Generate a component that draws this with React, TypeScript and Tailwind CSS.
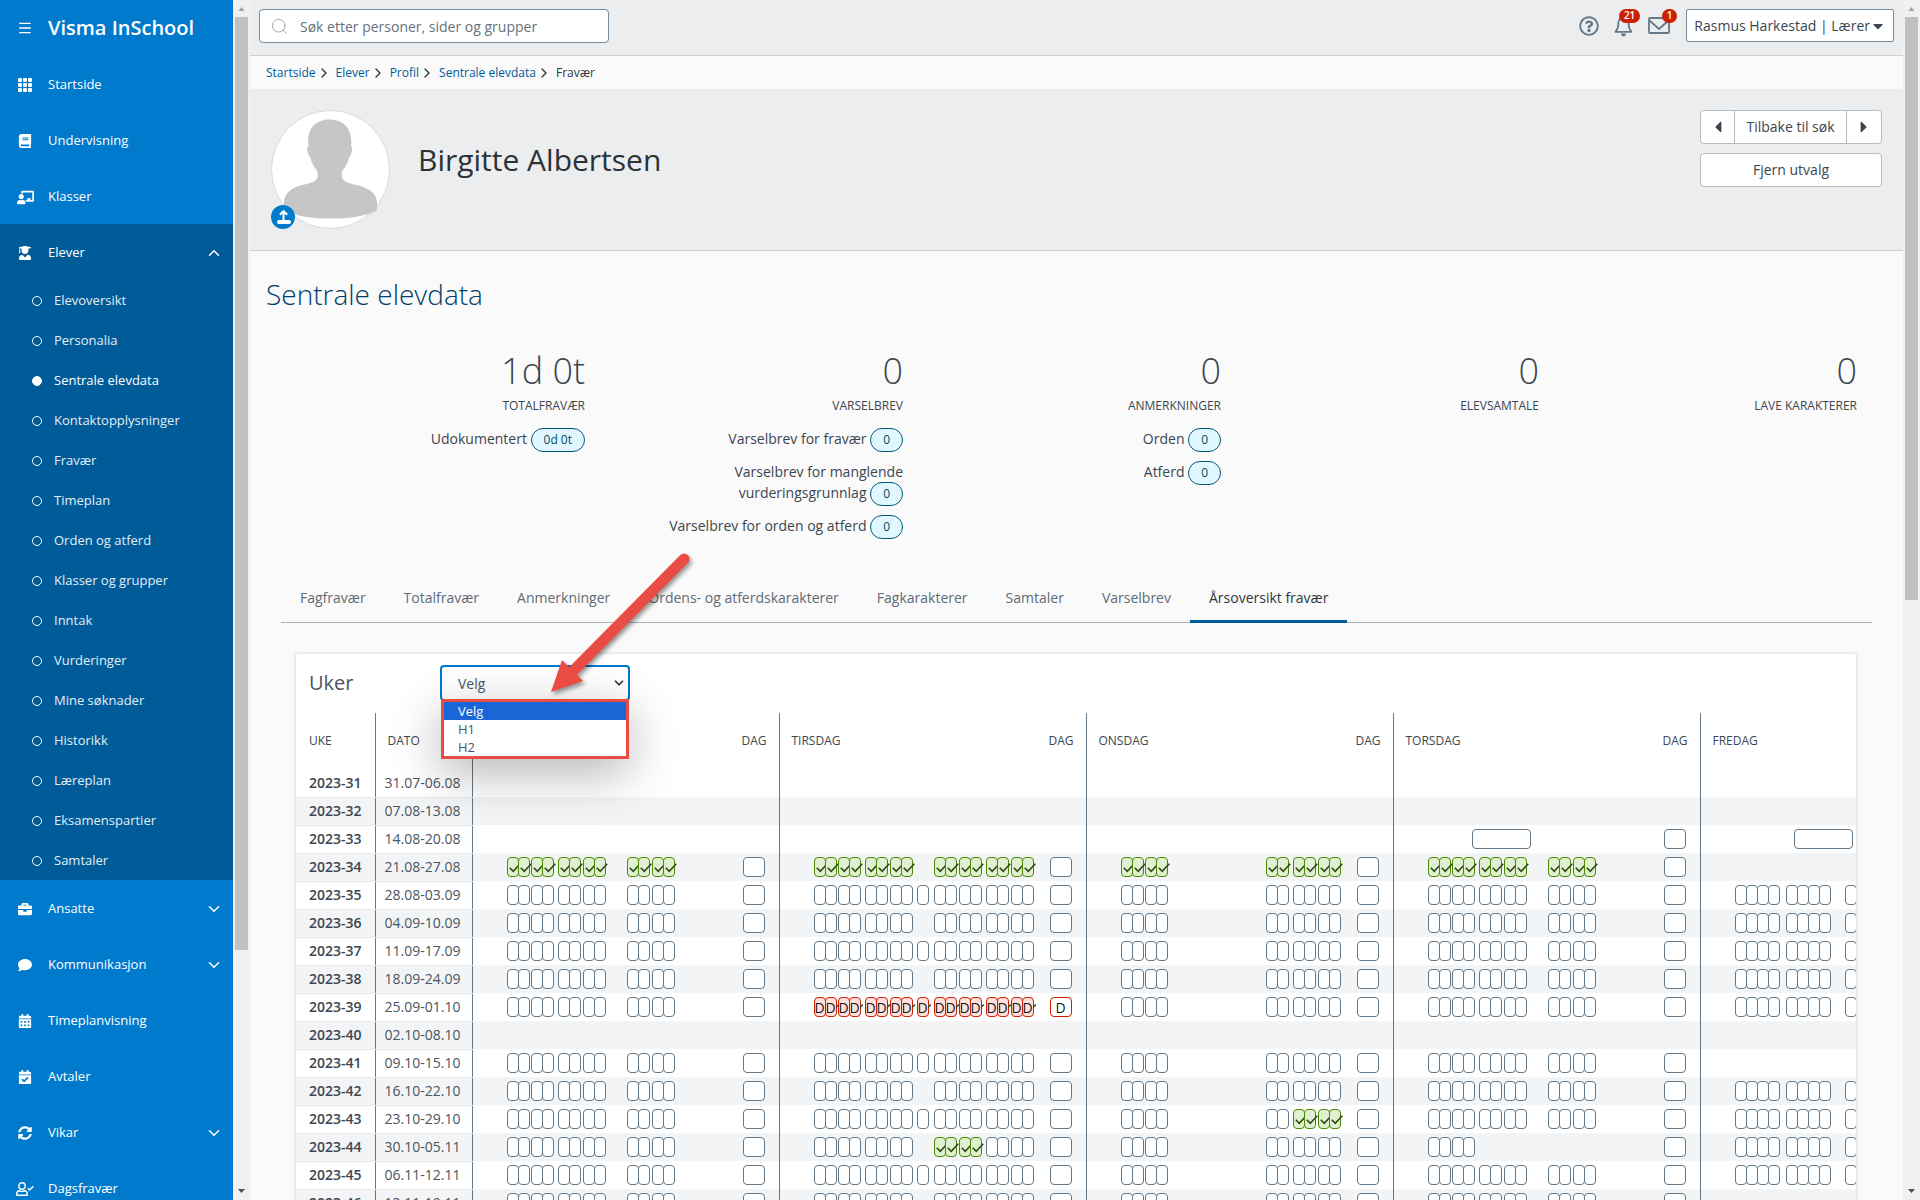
import { useState } from 'react';
import type { ReactNode } from 'react';
import {
  FaBook,
  FaBriefcase,
  FaCalendarAlt,
  FaCalendarCheck,
  FaCaretDown,
  FaCaretLeft,
  FaCaretRight,
  FaChalkboardTeacher,
  FaComment,
  FaRegQuestionCircle,
  FaSyncAlt,
  FaUserGraduate,
} from 'react-icons/fa';
import { BsGrid3X3GapFill } from 'react-icons/bs';
import { ChevronDown, ChevronRight, ChevronUp, Menu, Search } from 'lucide-react';
import clsx from 'clsx';

type NavItem = { label: string; icon: ReactNode; expandable?: boolean };

const topNav: NavItem[] = [
  { label: 'Startside', icon: <BsGrid3X3GapFill size={16} /> },
  { label: 'Undervisning', icon: <FaBook size={14} /> },
  { label: 'Klasser', icon: <FaChalkboardTeacher size={17} /> },
];

const subNav = [
  'Elevoversikt',
  'Personalia',
  'Sentrale elevdata',
  'Kontaktopplysninger',
  'Fravær',
  'Timeplan',
  'Orden og atferd',
  'Klasser og grupper',
  'Inntak',
  'Vurderinger',
  'Mine søknader',
  'Historikk',
  'Læreplan',
  'Eksamenspartier',
  'Samtaler',
];

const bottomNav: NavItem[] = [
  { label: 'Ansatte', icon: <FaBriefcase size={14} />, expandable: true },
  { label: 'Kommunikasjon', icon: <FaComment size={14} />, expandable: true },
  { label: 'Timeplanvisning', icon: <FaCalendarAlt size={14} /> },
  { label: 'Avtaler', icon: <FaCalendarCheck size={14} /> },
  { label: 'Vikar', icon: <FaSyncAlt size={14} />, expandable: true },
  { label: 'Dagsfravær', icon: <UserCheckIcon /> },
];

const crumbs = ['Startside', 'Elever', 'Profil', 'Sentrale elevdata'];

const stats = [
  { value: '1d 0t', label: 'Totalfravær', rows: [['Udokumentert', '0d 0t']] },
  {
    value: '0',
    label: 'Varselbrev',
    rows: [
      ['Varselbrev for fravær', '0'],
      ['Varselbrev for manglende vurderingsgrunnlag', '0'],
      ['Varselbrev for orden og atferd', '0'],
    ],
  },
  { value: '0', label: 'Anmerkninger', rows: [['Orden', '0'], ['Atferd', '0']] },
  { value: '0', label: 'Elevsamtale', rows: [] },
  { value: '0', label: 'Lave karakterer', rows: [] },
];

const tabs = [
  'Fagfravær',
  'Totalfravær',
  'Anmerkninger',
  'Ordens- og atferdskarakterer',
  'Fagkarakterer',
  'Samtaler',
  'Varselbrev',
  'Årsoversikt fravær',
];

type Mark = 'empty' | 'present' | 'documented';
type Slot = { start: number; width: number; mark: Mark };
type Day = { slots: Slot[]; dag: Mark | null };

const weekdays = ['Mandag', 'Tirsdag', 'Onsdag', 'Torsdag', 'Fredag'];
const morning = [34, 45, 58, 69, 85, 96, 110, 121];
const midday = [154, 165, 179, 190];
const afternoon = [206, 217, 231, 242];
const none: Day = { slots: [], dag: null };

const makeSlots = (starts: number[], mark: Mark = 'empty', width = 12): Slot[] =>
  starts.map((start) => ({ start, width, mark }));

function monday(week: number): Day {
  if (week < 34 || week === 40) return none;
  return { slots: makeSlots([...morning, ...midday], week === 34 ? 'present' : 'empty'), dag: 'empty' };
}

function tuesday(week: number): Day {
  if (week < 34 || week === 40) return none;
  const mark: Mark = week === 34 ? 'present' : week === 39 ? 'documented' : 'empty';
  const lunch = week % 2 ? [137] : [];
  return {
    slots: [
      ...makeSlots([...morning, ...lunch], mark),
      ...makeSlots(midday, week === 44 ? 'present' : mark),
      ...makeSlots(afternoon, mark),
    ],
    dag: week === 39 ? 'documented' : 'empty',
  };
}

function wednesday(week: number): Day {
  if (week < 34 || week === 40) return none;
  const mark: Mark = week === 34 ? 'present' : 'empty';
  return {
    slots: [
      ...makeSlots([34, 45, 58, 69, 179, 190], mark),
      ...makeSlots(afternoon, week === 43 ? 'present' : mark),
    ],
    dag: 'empty',
  };
}

function thursday(week: number): Day {
  if (week === 33) return { slots: makeSlots([78], 'empty', 59), dag: 'empty' };
  if (week < 34 || week === 40) return none;
  const starts = week === 44 ? morning.slice(0, 4) : [...morning, ...midday];
  return { slots: makeSlots(starts, week === 34 ? 'present' : 'empty'), dag: 'empty' };
}

function friday(week: number): Day {
  if (week === 33) return { slots: makeSlots([93], 'empty', 59), dag: 'empty' };
  if (week < 35 || [40, 41, 46].includes(week)) return none;
  return { slots: makeSlots([34, 45, 56, 67, 85, 96, 107, 118, 144, 155, 169, 180], 'empty'), dag: 'empty' };
}

const dates = [
  '31.07-06.08',
  '07.08-13.08',
  '14.08-20.08',
  '21.08-27.08',
  '28.08-03.09',
  '04.09-10.09',
  '11.09-17.09',
  '18.09-24.09',
  '25.09-01.10',
  '02.10-08.10',
  '09.10-15.10',
  '16.10-22.10',
  '23.10-29.10',
  '30.10-05.11',
  '06.11-12.11',
  '13.11-19.11',
];

const weeks = dates.map((date, i) => {
  const week = 31 + i;
  return { name: `2023-${week}`, date, days: [monday(week), tuesday(week), wednesday(week), thursday(week), friday(week)] };
});

function UserCheckIcon() {
  return (
    <svg width="18" height="14" viewBox="0 0 18 14" fill="none" stroke="currentColor" strokeWidth="1.4">
      <circle cx="6" cy="4" r="3.2" />
      <path d="M.8 13.2v-1.4c0-2 1.6-3 3-3 1 .5 3.400.5 4.400 0 1.400 0 3 1 3 3v1.400z" strokeLinejoin="round" />
      <path d="M11.800 6.200l1.800 1.800 3.800-3.800" />
    </svg>
  );
}

function BellIcon() {
  return (
    <svg width="19" height="22" viewBox="0 0 19 22">
      <path
        d="M9.500 2.600c-3.400 0-5.100 2.400-5.100 5.200 0 5-1.200 7.200-2.900 9h16c-1.700-1.800-2.900-4-2.900-9 0-2.800-1.700-5.200-5.100-5.200z"
        fill="none"
        stroke="currentColor"
        strokeWidth="1.800"
        strokeLinejoin="round"
      />
      <path d="M9.500 2.800V1" stroke="currentColor" strokeWidth="1.800" strokeLinecap="round" />
      <path d="M7 18.500h5c0 1.800-1 3-2.500 3S7 20.300 7 18.500z" fill="currentColor" />
    </svg>
  );
}

function MailIcon() {
  return (
    <svg width="22" height="17" viewBox="0 0 22 17" fill="none" stroke="currentColor" strokeWidth="1.800" strokeLinejoin="round">
      <rect x="1" y="1" width="20" height="15" rx="1" />
      <path d="M1.500 3.500L11 12l9.500-8.500" />
    </svg>
  );
}

function UploadBadge() {
  return (
    <button type="button" aria-label="Last opp bilde" className="absolute bottom-0 left-0 h-6 w-6 rounded-full bg-[#007acc]">
      <svg viewBox="0 0 24 24" className="h-6 w-6" fill="none" stroke="#fff">
        <path d="M12.500 6.500v9M8.800 9.800l3.700-3.700 3.700 3.700" strokeWidth="2" />
        <rect x="6.500" y="15.500" width="13" height="3" rx="1" fill="#fff" strokeWidth="1" />
      </svg>
    </button>
  );
}

function Avatar() {
  return (
    <div className="relative h-[119px] w-[119px] shrink-0">
      <svg viewBox="0 0 120 120" className="h-full w-full">
        <circle cx="60" cy="60" r="59.500" fill="#fff" stroke="#d6d9dc" />
        <path
          d="M59 9.500c14 0 22 9 22 22 0 2 0 4-.4 5.500 2 0 1.500 3.500.6 6-.6 2-1.200 4-2.400 4.200-1.400 6.800-4.400 11.300-7.300 14.800v5c0 4 5 6.500 12 8 14 2.500 23.500 8 23.500 19 0 3 0 5-.4 7.500C94 107.500 77 109.500 59 109.500S26 107 15 101.500c-1.500-3-2-5-2-8 0-10 8-16 21-18.500 8-1.500 13-4 13-8v-5c-3-3.500-6-8-7.400-14.800-1.200-.2-1.800-2.200-2.400-4.200-.8-2.500-1.300-6 .6-6-.3-1.500-.4-3.500-.4-5.500 0-13 7.600-22 21.600-22z"
          fill="#c6c6c6"
        />
      </svg>
      <UploadBadge />
    </div>
  );
}

function NavLink({ item }: { item: NavItem }) {
  return (
    <a href="#" className="flex h-14 shrink-0 items-center pt-0.5 pr-[10px] text-[13px] font-medium text-white">
      <span className="flex w-[50px] justify-center">{item.icon}</span>
      <span className="-ml-0.5 flex-1">{item.label}</span>
      {item.expandable ? <ChevronDown size={18} strokeWidth={2} /> : null}
    </a>
  );
}

function Sidebar() {
  return (
    <aside className="flex w-[233px] shrink-0 flex-col overflow-hidden bg-[#007acc]">
      <div className="flex h-14 shrink-0 items-center text-white">
        <button type="button" aria-label="Meny" className="flex w-[50px] justify-center">
          <Menu size={16} strokeWidth={2} />
        </button>
        <span className="-ml-0.5 text-xl font-semibold">Visma InSchool</span>
      </div>
      {topNav.map((item) => (
        <NavLink key={item.label} item={item} />
      ))}
      <div className="shrink-0 bg-[#005b99]">
        <a href="#" className="flex h-14 items-center pt-0.5 pr-[10px] text-[13px] font-medium text-white">
          <span className="flex w-[50px] justify-center">
            <FaUserGraduate size={14} />
          </span>
          <span className="-ml-0.5 flex-1">Elever</span>
          <ChevronUp size={18} strokeWidth={2} />
        </a>
        <nav>
          {subNav.map((label) => {
            const active = label === 'Sentrale elevdata';
            return (
              <a
                key={label}
                href="#"
                className={clsx('flex h-10 items-center gap-3 pt-0.5 pl-8 text-[13px]', active ? 'font-medium text-white' : 'text-[#e3eef7]')}
              >
                <span className={clsx('h-[10px] w-[10px] rounded-full border border-white', active && 'bg-white')} />
                {label}
              </a>
            );
          })}
        </nav>
      </div>
      {bottomNav.map((item) => (
        <NavLink key={item.label} item={item} />
      ))}
    </aside>
  );
}

function Scrollbar({ tall }: { tall?: boolean }) {
  return (
    <div className="flex w-[17px] shrink-0 flex-col items-center bg-[#f0f0f0]" aria-hidden="true">
      <svg width="17" height="17" viewBox="0 0 17 17">
        <path d="M5.500 11h6L8.500 7z" fill="#a3a3a3" />
      </svg>
      <div className="flex w-[13px] flex-1 flex-col">
        <div className={clsx('bg-[#c1c1c1]', tall ? 'h-4/5' : 'h-1/2')} />
      </div>
      <svg width="17" height="17" viewBox="0 0 17 17">
        <path d="M5 6h7l-3.500 4z" fill="#505050" />
      </svg>
    </div>
  );
}

function IconButton({ label, count, children }: { label: string; count?: number; children: ReactNode }) {
  return (
    <button type="button" aria-label={label} className="relative flex h-[22px] items-center text-[#647888]">
      {children}
      {count ? (
        <span className="absolute -top-[6px] -right-[7px] flex h-[14px] items-center rounded-full bg-[#cc1f00] px-[5px] text-[10px] font-semibold text-white">
          {count}
        </span>
      ) : null}
    </button>
  );
}

function Header() {
  return (
    <header className="flex h-14 shrink-0 items-start justify-between border-b border-[#cfd2d4] bg-[#ecedef] pt-[9px] pr-[9px] pl-[9px]">
      <label className="flex h-[34px] w-[350px] items-center gap-[11px] rounded-[4px] border border-[#7a8b9a] bg-white px-[10px]">
        <Search size={19} strokeWidth={1} className="text-[#8a949e]" />
        <input
          type="search"
          aria-label="Søk"
          placeholder="Søk etter personer, sider og grupper"
          className="flex-1 pt-px text-sm outline-none placeholder:text-[#66717b]"
        />
      </label>
      <div className="flex items-center">
        <div className="flex items-center gap-[15px] pr-4">
          <IconButton label="Hjelp">
            <FaRegQuestionCircle size={20} />
          </IconButton>
          <IconButton label="Varsler" count={21}>
            <BellIcon />
          </IconButton>
          <IconButton label="Meldinger" count={1}>
            <MailIcon />
          </IconButton>
        </div>
        <button type="button" className="flex h-[33px] items-center rounded-[2px] border border-[#7a8b9a] bg-white px-[7px] text-sm font-medium text-[#3c4650]">
          Rasmus Harkestad | Lærer
          <FaCaretDown size={16} />
        </button>
      </div>
    </header>
  );
}

function Breadcrumbs() {
  return (
    <nav aria-label="Brødsmulesti" className="flex h-[33px] shrink-0 items-center pl-4 text-xs text-[#005b99]">
      {crumbs.map((crumb) => (
        <span key={crumb} className="flex items-center">
          <a href="#">{crumb}</a>
          <ChevronRight size={16} strokeWidth={2} className="mr-1 text-[#30373d]" />
        </span>
      ))}
      <span className="text-[#30373d]">Fravær</span>
    </nav>
  );
}

function ProfileBar() {
  return (
    <section className="flex h-[162px] shrink-0 items-start justify-between border-b border-[#cfd2d4] bg-[#ecedef] pt-[21px] pr-[21px] pl-[21px]">
      <div className="flex gap-7">
        <Avatar />
        <h1 className="pt-[30px] text-3xl leading-10 text-[#2b3238]">Birgitte Albertsen</h1>
      </div>
      <div className="flex w-[182px] flex-col gap-[9px] text-sm text-[#3c4650]">
        <div className="flex h-[34px] divide-x divide-[#b5bdc4] rounded-[4px] border border-[#b5bdc4] bg-white">
          <button type="button" aria-label="Forrige" className="flex w-[34px] items-center justify-center">
            <FaCaretLeft size={18} />
          </button>
          <button type="button" className="flex-1 whitespace-nowrap">
            Tilbake til søk
          </button>
          <button type="button" aria-label="Neste" className="flex w-[34px] items-center justify-center">
            <FaCaretRight size={18} />
          </button>
        </div>
        <button type="button" className="h-[34px] rounded-[4px] border border-[#b5bdc4] bg-white">
          Fjern utvalg
        </button>
      </div>
    </section>
  );
}

function Stats() {
  return (
    <section className="grid grid-cols-5 pt-[33px] pr-[46px] pl-[17px] text-right text-[#3c4650]">
      {stats.map((stat) => (
        <div key={stat.label} className="flex flex-col items-end">
          <p className="text-4xl leading-[48px] font-light">{stat.value}</p>
          <p className="text-xs leading-[22px] uppercase">{stat.label}</p>
          <div className="flex flex-col gap-3 pt-[11px]">
            {stat.rows.map(([label, value]) => (
              <p key={label} className="ml-auto max-w-[250px] text-sm leading-[21px]">
                {label}{' '}
                <span className="-my-1 inline-flex h-6 items-center rounded-full border border-[#005b77] bg-[#e0f7ff] px-3 align-middle text-xs text-[#004a66]">
                  {value}
                </span>
              </p>
            ))}
          </div>
        </div>
      ))}
    </section>
  );
}

function Tabs() {
  const [active, setActive] = useState('Årsoversikt fravær');

  return (
    <div role="tablist" className="mt-[37px] mr-[31px] ml-[31px] flex border-b border-[#a9b4bd]">
      {tabs.map((tab) => (
        <button
          key={tab}
          type="button"
          role="tab"
          aria-selected={tab === active}
          onClick={() => setActive(tab)}
          className={clsx(
            '-mb-px h-[50px] border-b-[3px] px-[19px] pt-0.5 text-sm whitespace-nowrap',
            tab === active ? 'border-[#005b99] text-[#30373d]' : 'border-transparent text-[#5f6b76]',
          )}
        >
          {tab}
        </button>
      ))}
    </div>
  );
}

function Tick() {
  return (
    <svg width="12" height="10" viewBox="0 0 12 10" className="mt-0.5 ml-px shrink-0" fill="none" stroke="#2c4a12" strokeWidth="1.600">
      <path d="M.8 4.800l3.400 3.600L11.300.8" />
    </svg>
  );
}

function Box({ mark, width, offset = 0 }: { mark: Mark; width: number; offset?: number }) {
  return (
    <span
      className={clsx(
        'flex h-5 shrink-0 items-center rounded-[4px] border',
        mark === 'empty' && 'border-[#647888] bg-white',
        mark === 'present' && 'border-[#4a8a00] bg-[#e2f0d2]',
        mark === 'documented' && 'border-[#cc1f00] bg-[#ffe0dc] text-sm text-[#14181b]',
      )}
      style={{ width, marginLeft: offset }}
    >
      {mark === 'present' ? <Tick /> : null}
      {mark === 'documented' ? (
        <>
          <span className="w-[10px] pt-px">D</span>
          {/* the tick sits behind the D, only its tip shows */}
          <svg width="3" height="4" viewBox="0 0 3 4" className="-mt-0.5 shrink-0" fill="none" stroke="#2c4a12" strokeWidth="1.400">
            <path d="M0 3.500L2.800.5" />
          </svg>
        </>
      ) : null}
    </span>
  );
}

function DayCell({ day }: { day: Day }) {
  return (
    <div className="flex items-center justify-between pr-[14px]">
      <div className="flex">
        {day.slots.map((slot, i) => {
          const previous = day.slots[i - 1];
          const end = previous ? previous.start + previous.width : 0;
          return <Box key={slot.start} mark={slot.mark} width={slot.width} offset={slot.start - end} />;
        })}
      </div>
      {day.dag === 'documented' ? (
        <span className="flex h-5 w-[22px] items-center justify-center rounded-[4px] border border-[#cc1f00] bg-white pt-px text-sm text-[#14181b]">
          D
        </span>
      ) : null}
      {day.dag === 'empty' ? <Box mark="empty" width={22} /> : null}
    </div>
  );
}

function WeekSelect() {
  const [value, setValue] = useState('Velg');
  const options = ['Velg', 'H1', 'H2'];

  return (
    <div className="relative w-[190px]">
      <select
        id="uker"
        value={value}
        onChange={(event) => setValue(event.target.value)}
        className="block h-9 w-full appearance-none rounded-[4px] border-2 border-[#007acc] bg-white pt-0.5 pl-4 text-sm text-[#4a555f] outline-none"
      >
        {options.map((option) => (
          <option key={option}>{option}</option>
        ))}
      </select>
      <ChevronDown size={14} strokeWidth={3} className="pointer-events-none absolute top-[11px] right-1 text-[#30373d]" />
      <ul className="absolute top-[34px] right-px left-px z-10 border-[3px] border-[#ea4b43] bg-white text-[13px] leading-[18px] text-[#4a555f] shadow-[0_14px_50px_rgba(0,0,0,0.3)]">
        {options.map((option) => (
          <li key={option} className={clsx('pl-[14px]', option === value && 'bg-[#1a66d6] text-white')}>
            {option}
          </li>
        ))}
      </ul>
      <Arrow />
    </div>
  );
}

// red pointer with its tip at the select
function Arrow() {
  return (
    <svg
      viewBox="0 0 150 150"
      className="pointer-events-none absolute bottom-[6px] left-[108px] z-20 h-[150px] w-[150px] overflow-visible drop-shadow-[2px_3px_2px_rgba(0,0,0,0.4)]"
    >
      <path d="M136 14L24 127" stroke="#ea4b43" strokeWidth="11" strokeLinecap="round" />
      <path d="M3 147L14 115L35 136z" fill="#ea4b43" />
    </svg>
  );
}

function WeekTable() {
  return (
    <table className="w-[1711px] table-fixed border-collapse text-left text-sm text-[#3c4650]">
      <colgroup>
        <col className="w-[79px]" />
        <col className="w-[97px]" />
        {weekdays.map((day) => (
          <col key={day} className="w-[307px]" />
        ))}
      </colgroup>
      <thead>
        <tr className="h-14 text-xs">
          <th className="border-r border-[#647888] pl-[13px] font-medium">UKE</th>
          <th className="border-r border-[#647888] pl-3 font-medium">DATO</th>
          {weekdays.map((day) => (
            <th key={day} className="border-r border-[#647888] pr-3 pl-3 font-medium">
              <div className="flex justify-between uppercase">
                <span>{day}</span>
                <span>Dag</span>
              </div>
            </th>
          ))}
        </tr>
      </thead>
      <tbody>
        {weeks.map((week) => (
          <tr key={week.name} className="h-7 even:bg-[#f2f4f5]">
            <th scope="row" className="border-r border-b border-r-[#647888] border-b-[#e6e8ea] p-0 pl-[13px] font-semibold">
              {week.name}
            </th>
            <td className="border-r border-b border-r-[#647888] border-b-[#e6e8ea] p-0 pl-[9px] text-[#4a555f]">{week.date}</td>
            {week.days.map((day, i) => (
              <td key={weekdays[i]} className="border-r border-[#647888] p-0">
                <DayCell day={day} />
              </td>
            ))}
          </tr>
        ))}
      </tbody>
    </table>
  );
}

export default function App() {
  return (
    <div className="flex h-screen overflow-hidden bg-[#fafafa] font-['Open_Sans','Noto_Sans',sans-serif]">
      <Sidebar />
      <Scrollbar tall />
      <main className="flex min-w-0 flex-1 flex-col overflow-hidden">
        <Header />
        <Breadcrumbs />
        <ProfileBar />
        <h2 className="pt-[23px] pl-4 text-[28px] leading-10 font-light text-[#003e6b]">Sentrale elevdata</h2>
        <Stats />
        <Tabs />
        <section className="mt-[31px] mr-[47px] ml-[46px] shrink-0 bg-white shadow-[0_0_3px_rgba(0,0,0,0.2)]">
          <div className="flex h-[59px] items-center pb-px">
            <label htmlFor="uker" className="w-36 pl-[13px] text-xl text-[#4a555f]">
              Uker
            </label>
            <WeekSelect />
          </div>
          <div className="overflow-hidden">
            <WeekTable />
          </div>
        </section>
      </main>
      <Scrollbar />
    </div>
  );
}
